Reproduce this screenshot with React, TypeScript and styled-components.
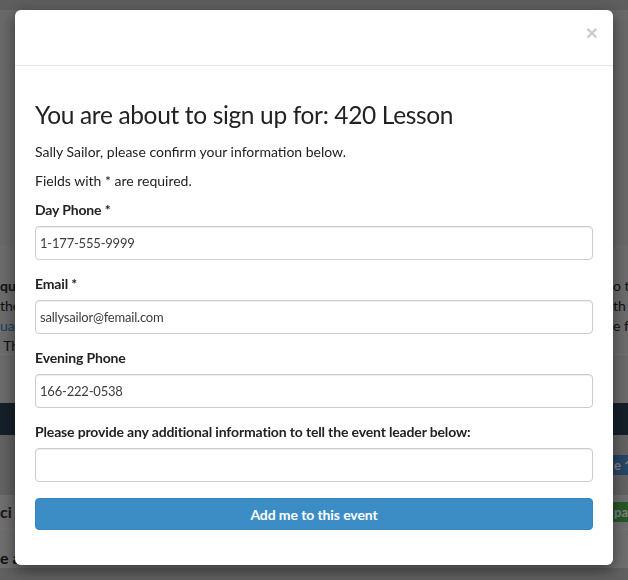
import React from "react";
import styled, { createGlobalStyle } from "styled-components";

const Global = createGlobalStyle`
  html, body { margin: 0; padding: 0; }
  body {
    width: 628px;
    height: 580px;
    overflow: hidden;
    background: #c8c8c8;
    font-family: Lato, "Open Sans", "Liberation Sans", sans-serif;
  }
  * { box-sizing: border-box; }
`;

/* ---------- background page ---------- */
const Page = styled.div`
  width: 628px;
  height: 580px;
  display: flex;
  flex-direction: column;
  background: #cfcfcf;
  overflow: hidden;
`;

const Band = styled.div<{ $h: number; $bg: string; $border?: boolean; $bottom?: boolean }>`
  height: ${(p) => p.$h}px;
  flex: none;
  background: ${(p) => p.$bg};
  border-bottom: ${(p) => (p.$border ? "1px solid #e6e6e6" : "none")};
  display: flex;
  justify-content: space-between;
  align-items: ${(p) => (p.$bottom ? "flex-end" : "center")};
  overflow: hidden;
`;

const TextBand = styled(Band)`
  align-items: flex-start;
  padding-top: 31px;
`;

const Snip = styled.div`
  width: 40px;
  font-size: 14px;
  line-height: 20px;
  color: #222;
  white-space: nowrap;
  overflow: hidden;
`;

const SnipLine = styled.div<{ $bold?: boolean; $link?: boolean }>`
  font-weight: ${(p) => (p.$bold ? 700 : 400)};
  color: ${(p) => (p.$link ? "#3a79b5" : "#222")};
`;

const RightSnip = styled.div`
  width: 15px;
  font-size: 14px;
  line-height: 20px;
  white-space: nowrap;
  overflow: hidden;
`;

const BgButton = styled.div<{ $bg: string }>`
  width: 15px;
  height: 20px;
  background: ${(p) => p.$bg};
  color: #fff;
  font-size: 13px;
  font-weight: 700;
  line-height: 20px;
  white-space: nowrap;
  overflow: hidden;
  padding-left: 1px;
`;

const BgTitle = styled.div<{ $color?: string }>`
  font-size: 16px;
  font-weight: 700;
  line-height: 20px;
  color: ${(p) => p.$color || "#222"};
  white-space: nowrap;
`;

/* ---------- modal ---------- */
const Overlay = styled.div`
  position: fixed;
  inset: 0;
  background: rgba(0, 0, 0, 0.5);
`;

const ModalWrap = styled.div`
  position: fixed;
  inset: 0;
  display: flex;
  justify-content: center;
  align-items: flex-start;
  padding-top: 10px;
`;

const Dialog = styled.div`
  width: 598px;
  background: #fff;
  border-radius: 6px;
  box-shadow: 0 5px 15px rgba(0, 0, 0, 0.5);
  overflow: hidden;
`;

const Header = styled.div`
  height: 56px;
  border-bottom: 1px solid #e5e5e5;
  display: flex;
  justify-content: flex-end;
  align-items: flex-start;
  padding: 12px 15px 0 15px;
`;

const Close = styled.button`
  border: none;
  background: none;
  padding: 0;
  font-family: "Liberation Sans", Arial, sans-serif;
  font-size: 21px;
  font-weight: 700;
  line-height: 21px;
  color: #000;
  opacity: 0.2;
  cursor: pointer;
`;

const Body = styled.div`
  padding: 34px 20px 35px 20px;
  display: flex;
  flex-direction: column;
  color: #333;
`;

const Title = styled.h3`
  margin: 0 0 12px 0;
  font-size: 24.5px;
  font-weight: 400;
  line-height: 30px;
  color: #222;
  letter-spacing: -0.35px;
`;

const Para = styled.p`
  margin: 0 0 9px 0;
  font-size: 14px;
  line-height: 20px;
  color: #222;
`;

const Field = styled.div`
  display: flex;
  flex-direction: column;
  margin-bottom: 14px;
`;

const Label = styled.label`
  font-size: 14px;
  font-weight: 700;
  line-height: 20px;
  color: #222;
  letter-spacing: -0.15px;
  margin-bottom: 6px;
`;

const Input = styled.input`
  height: 34px;
  width: 100%;
  border: 1px solid #ccc;
  border-radius: 4px;
  padding: 6px 4px;
  font-family: inherit;
  font-size: 13px;
  letter-spacing: -0.2px;
  color: #3d3d3d;
  box-shadow: inset 0 1px 1px rgba(0, 0, 0, 0.075);
  outline: none;
`;

const Submit = styled.button`
  margin-top: 2px;
  height: 32px;
  width: 100%;
  border: 1px solid #3685c0;
  border-radius: 4px;
  background: #3c8dc5;
  color: #fff;
  font-family: inherit;
  font-size: 14px;
  font-weight: 700;
  letter-spacing: -0.1px;
  cursor: pointer;
`;

const fields = [
  { label: "Day Phone", req: true, value: "1-177-555-9999" },
  { label: "Email", req: true, value: "sallysailor@femail.com" },
  { label: "Evening Phone", req: false, value: "166-222-0538" },
  {
    label: "Please provide any additional information to tell the event leader below:",
    req: false,
    value: "",
  },
];

export default function App() {
  return (
    <>
      <Global />
      <Page>
        <Band $h={10} $bg="#bcbcbc" />
        <Band $h={235} $bg="#d2d2d2" />
        <TextBand $h={110} $bg="#d8d8d8" $border>
          <Snip>
            <SnipLine $bold>qu</SnipLine>
            <SnipLine>the</SnipLine>
            <SnipLine $link>ual</SnipLine>
            <SnipLine>&nbsp;Th</SnipLine>
          </Snip>
          <RightSnip>
            <SnipLine>o te</SnipLine>
            <SnipLine>th</SnipLine>
            <SnipLine>e fo</SnipLine>
          </RightSnip>
        </TextBand>
        <Band $h={48} $bg="#d6d6d6" />
        <Band $h={32} $bg="#2a3f52" />
        <Band $h={60} $bg="#c4c4c4">
          <span />
          <BgButton $bg="#4b8ccc">e ↑</BgButton>
        </Band>
        <Band $h={35} $bg="#dedede" $border>
          <BgTitle $color="#3a2a20">ci</BgTitle>
          <BgButton $bg="#4caf50">pan</BgButton>
        </Band>
        <Band $h={38} $bg="#dddddd" $bottom>
          <BgTitle>e a</BgTitle>
        </Band>
        <Band $h={20} $bg="#c0c0c0" />
      </Page>
      <Overlay />
      <ModalWrap>
        <Dialog>
          <Header>
            <Close aria-label="Close">×</Close>
          </Header>
          <Body>
            <Title>You are about to sign up for: 420 Lesson</Title>
            <Para>Sally Sailor, please confirm your information below.</Para>
            <Para>Fields with * are required.</Para>
            {fields.map((f) => (
              <Field key={f.label}>
                <Label>
                  {f.label}
                  {f.req ? " *" : ""}
                </Label>
                <Input defaultValue={f.value} />
              </Field>
            ))}
            <Submit>Add me to this event</Submit>
          </Body>
        </Dialog>
      </ModalWrap>
    </>
  );
}
